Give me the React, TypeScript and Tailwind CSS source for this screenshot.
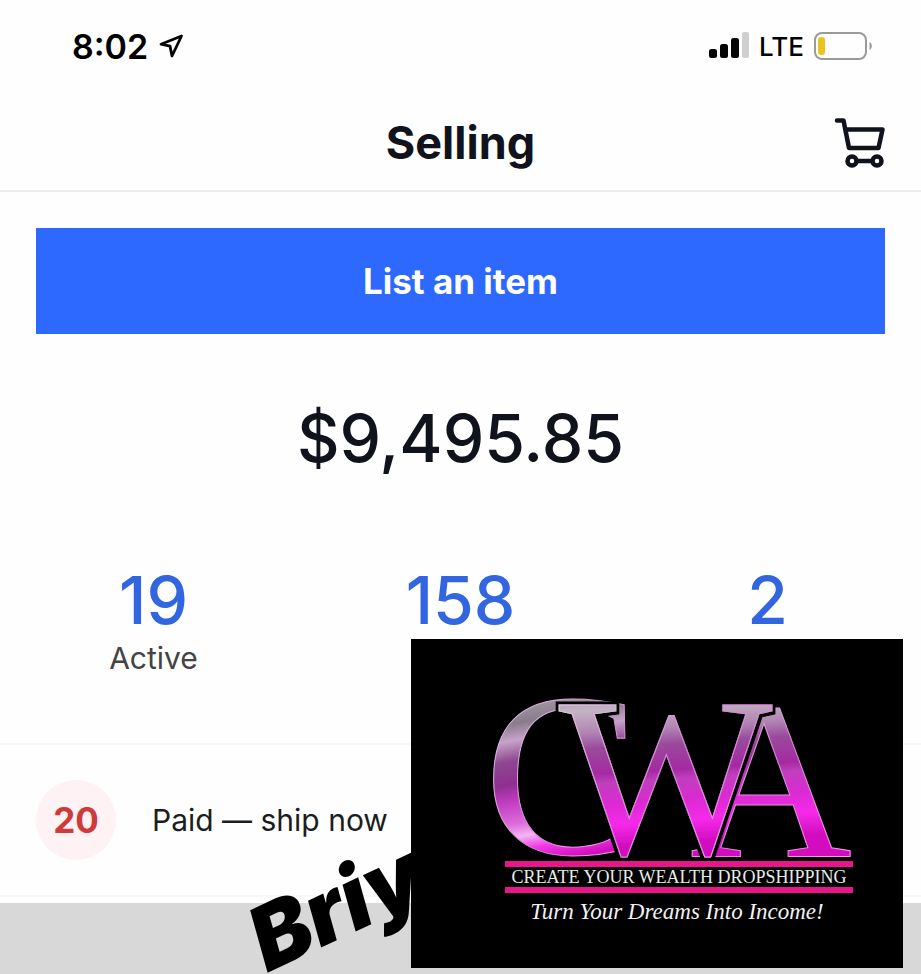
const stats = [
  { value: "19", label: "Active" },
  { value: "158", label: "" },
  { value: "2", label: "" },
];

function LocationArrow() {
  return (
    <svg className="h-6 w-[26px]" viewBox="0 0 26 24" fill="none" stroke="#050505" strokeWidth="2.800" strokeLinejoin="round" aria-hidden="true">
      <path d="M23.500 2 3 10.200l9 1.900L14 22 23.500 2Z" />
    </svg>
  );
}

function Signal() {
  return (
    <svg className="h-7 w-10" viewBox="0 0 40 28" fill="#050505" aria-hidden="true">
      <rect x="0" y="17" width="8" height="9" rx="2.500" />
      <rect x="11" y="12" width="8" height="14" rx="2.500" />
      <rect x="22" y="6" width="8" height="20" rx="2.500" />
      <rect x="33" y="0" width="7" height="26" rx="2" fill="#cfcfcf" />
    </svg>
  );
}

function Battery() {
  return (
    <svg className="h-7 w-[59px]" viewBox="0 0 59 28" fill="none" aria-hidden="true">
      <rect x="1" y="1" width="51" height="26" rx="7" stroke="#9a9a9a" strokeWidth="2" />
      <rect x="4" y="5" width="7" height="18" rx="3" fill="#e9c41f" />
      <path d="M55.500 10v8c1.500-.8 2.300-2.200 2.300-4s-.8-3.200-2.300-4Z" fill="#9a9a9a" />
    </svg>
  );
}

function Cart() {
  return (
    <svg className="h-[50px] w-[52px]" viewBox="0 0 52 50" fill="none" stroke="#10131b" strokeWidth="4.500" strokeLinecap="round" strokeLinejoin="round" aria-hidden="true">
      <path d="M4 2.500h6.500L16 30h29.500L49.500 11.500H12.500" />
      <circle cx="19" cy="43" r="4.500" />
      <circle cx="44" cy="43" r="4.500" />
      <path d="M24 43h15" />
    </svg>
  );
}

function BrandCard() {
  return (
    <div className="absolute right-[18px] bottom-[6px] h-[329px] w-[492px] bg-black">
      <svg className="h-full w-full" viewBox="0 0 492 329" role="img" aria-label="CWA Create Your Wealth Dropshipping">
        <defs>
          <linearGradient id="metal" gradientUnits="userSpaceOnUse" x1="0" y1="60" x2="10" y2="220">
            <stop offset="0" stopColor="#9c979c" />
            <stop offset="0.14" stopColor="#c3b4c4" />
            <stop offset="0.28" stopColor="#b184b3" />
            <stop offset="0.38" stopColor="#9a4a9c" />
            <stop offset="0.54" stopColor="#a52aa2" />
            <stop offset="0.6" stopColor="#c03fbe" />
            <stop offset="0.72" stopColor="#d92bd1" />
            <stop offset="0.86" stopColor="#f52ae9" />
            <stop offset="1" stopColor="#d20dbd" />
          </linearGradient>
          <linearGradient id="bowl" gradientUnits="userSpaceOnUse" x1="120" y1="58" x2="150" y2="220">
            <stop offset="0" stopColor="#a5a0a5" />
            <stop offset="0.14" stopColor="#8a7c8c" />
            <stop offset="0.24" stopColor="#c7a3c9" />
            <stop offset="0.36" stopColor="#8d4890" />
            <stop offset="0.5" stopColor="#8f2f90" />
            <stop offset="0.6" stopColor="#c03cbf" />
            <stop offset="0.74" stopColor="#dd6cda" />
            <stop offset="0.82" stopColor="#f6b4f3" />
            <stop offset="0.9" stopColor="#f13be6" />
            <stop offset="1" stopColor="#d20dbd" />
          </linearGradient>
          <linearGradient id="edge" x1="0" y1="0" x2="1" y2="1">
            <stop offset="0" stopColor="#e8dde8" />
            <stop offset="0.5" stopColor="#d88bd8" />
            <stop offset="1" stopColor="#ff9cf8" />
          </linearGradient>
          <filter id="gap" x="-0.100" y="-0.100" width="1.200" height="1.200">
            <feMorphology in="SourceAlpha" operator="dilate" radius="3" result="halo" />
            <feMerge>
              <feMergeNode in="halo" />
              <feMergeNode in="SourceGraphic" />
            </feMerge>
          </filter>
        </defs>
        <g fontFamily="'Liberation Serif', serif" fill="url(#metal)" stroke="url(#edge)" strokeWidth="1">
          <text x="73" y="215" fontSize="234" fill="url(#bowl)">C</text>
          <text x="279" y="217" fontSize="224">A</text>
          <text x="148" y="215" fontSize="226" filter="url(#gap)">W</text>
        </g>
        <rect x="94" y="222" width="348" height="6" fill="#e7168b" />
        <rect x="94" y="248" width="348" height="6" fill="#e7168b" />
        <text x="268" y="244" textAnchor="middle" fontFamily="'Liberation Serif', serif" fontSize="18" fill="#e4ebe7">CREATE YOUR WEALTH DROPSHIPPING</text>
        <text x="266" y="280" textAnchor="middle" fontFamily="'Liberation Serif', serif" fontStyle="italic" fontSize="23" fill="#f2f2f2">Turn Your Dreams Into Income!</text>
      </svg>
    </div>
  );
}

export default function App() {
  return (
    <div className="relative flex min-h-screen flex-col overflow-hidden bg-[#fefefe] font-['Inter',sans-serif] text-[#10131b]">
      <div className="flex h-24 items-center justify-between pr-12 pb-1 pl-[72px]">
        <div className="flex items-center gap-2.5 text-[34px] font-semibold text-black">
          <span>8:02</span>
          <LocationArrow />
        </div>
        <div className="flex items-center gap-2.5 text-[26px] font-medium text-black">
          <Signal />
          <span>LTE</span>
          <Battery />
        </div>
      </div>

      <header className="grid h-24 grid-cols-[1fr_auto_1fr] items-center border-b-2 border-[#ececec] px-9">
        <h1 className="col-start-2 text-[45px] font-bold">Selling</h1>
        <button type="button" aria-label="Cart" className="justify-self-end">
          <Cart />
        </button>
      </header>

      <main>
        <div className="px-9 pt-9">
          <button type="button" className="h-[106px] w-full bg-[#2d69ff] text-[35px] font-bold text-white">
            List an item
          </button>
        </div>
        <p className="pt-16 text-center text-[66px] leading-20 font-medium">$9,495.85</p>
        <ul className="grid h-[265px] grid-cols-3 pt-[82px] text-center">
          {stats.map((stat) => (
            <li key={stat.value}>
              <div className="text-[66px] leading-20 font-medium text-[#3266e0]">{stat.value}</div>
              <div className="text-[30px] leading-9 text-[#444]">{stat.label}</div>
            </li>
          ))}
        </ul>
        <div className="mb-[6px] flex h-[154px] items-center gap-9 border-y-2 border-[#f7f7f7] px-9">
          <span className="flex size-20 items-center justify-center rounded-full bg-[#fff2f5] text-[35px] font-bold text-[#cf3a3a]">20</span>
          <span className="text-[30px] text-[#1c1d22]">Paid — ship now</span>
        </div>
      </main>

      <footer className="flex-1 bg-[#d8d8d8]" />

      <span className="absolute bottom-[-15px] left-[275px] origin-bottom-left -rotate-25 text-[88px] leading-[100px] font-black text-black italic">
        Briy
      </span>
      <BrandCard />
    </div>
  );
}
